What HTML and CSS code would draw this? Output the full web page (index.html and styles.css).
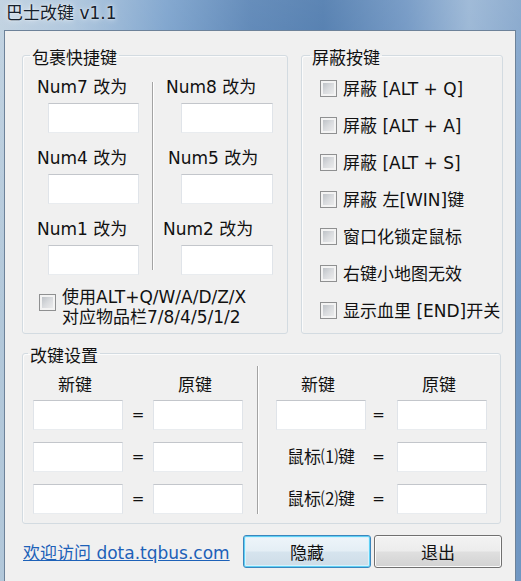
FILE: index.html
```
<!DOCTYPE html>
<html lang="zh-CN">
<head>
<meta charset="utf-8">
<title>巴士改键 v1.1</title>
<link rel="stylesheet" href="styles.css">
</head>
<body>
<div class="window">
  <div class="titlebar"><span class="title">巴士改键 v1.1</span></div>
  <div class="client">
    <div class="top-row">
      <fieldset class="group group-bag">
        <legend>包裹快捷键</legend>
        <div class="bag-grid">
          <div class="bag-col bag-left">
            <div class="cell"><div class="lbl">Num7 改为</div><div class="input bag-input"></div></div>
            <div class="cell"><div class="lbl">Num4 改为</div><div class="input bag-input"></div></div>
            <div class="cell"><div class="lbl">Num1 改为</div><div class="input bag-input"></div></div>
          </div>
          <div class="vdiv bag-div"></div>
          <div class="bag-col bag-right">
            <div class="cell"><div class="lbl">Num8 改为</div><div class="input bag-input"></div></div>
            <div class="cell"><div class="lbl lbl-r">Num5 改为</div><div class="input bag-input"></div></div>
            <div class="cell"><div class="lbl lbl-l">Num2 改为</div><div class="input bag-input"></div></div>
          </div>
        </div>
        <div class="check-row multi">
          <span class="cb"></span>
          <span class="cb-text">使用ALT+Q/W/A/D/Z/X<br>对应物品栏7/8/4/5/1/2</span>
        </div>
      </fieldset>
      <fieldset class="group group-block">
        <legend>屏蔽按键</legend>
        <ul class="block-list">
          <li class="check-row"><span class="cb"></span><span class="cb-text">屏蔽 [ALT + Q]</span></li>
          <li class="check-row"><span class="cb"></span><span class="cb-text">屏蔽 [ALT + A]</span></li>
          <li class="check-row"><span class="cb"></span><span class="cb-text">屏蔽 [ALT + S]</span></li>
          <li class="check-row"><span class="cb"></span><span class="cb-text">屏蔽 左[WIN]键</span></li>
          <li class="check-row"><span class="cb"></span><span class="cb-text">窗口化锁定鼠标</span></li>
          <li class="check-row"><span class="cb"></span><span class="cb-text">右键小地图无效</span></li>
          <li class="check-row"><span class="cb"></span><span class="cb-text">显示血里 [END]开关</span></li>
        </ul>
      </fieldset>
    </div>

    <fieldset class="group group-remap">
      <legend>改键设置</legend>
      <div class="remap">
        <div class="remap-half remap-left">
          <div class="r-row hdr-row"><div class="hdr">新键</div><div></div><div class="hdr">原键</div></div>
          <div class="r-row"><div class="input"></div><div class="eq">=</div><div class="input"></div></div>
          <div class="r-row"><div class="input"></div><div class="eq">=</div><div class="input"></div></div>
          <div class="r-row"><div class="input"></div><div class="eq">=</div><div class="input"></div></div>
        </div>
        <div class="vdiv remap-div"></div>
        <div class="remap-half remap-right">
          <div class="r-row hdr-row"><div class="hdr">新键</div><div></div><div class="hdr">原键</div></div>
          <div class="r-row"><div class="input"></div><div class="eq">=</div><div class="input"></div></div>
          <div class="r-row"><div class="mouse">鼠标⑴键</div><div class="eq">=</div><div class="input"></div></div>
          <div class="r-row"><div class="mouse">鼠标⑵键</div><div class="eq">=</div><div class="input"></div></div>
        </div>
      </div>
    </fieldset>

    <div class="bottom-row">
      <a class="link" href="#">欢迎访问 dota.tqbus.com</a>
      <div class="buttons">
        <button class="btn btn-default" type="button">隐藏</button>
        <button class="btn" type="button">退出</button>
      </div>
    </div>
  </div>
</div>
</body>
</html>
```
FILE: styles.css
```
* { box-sizing: border-box; }

html, body {
  margin: 0;
  padding: 0;
  width: 521px;
  height: 581px;
  overflow: hidden;
}

body {
  font-family: "DejaVu Sans", "Noto Sans CJK SC", sans-serif;
  font-size: 17px;
  color: #111;
}

.window {
  width: 521px;
  height: 581px;
  display: flex;
  flex-direction: column;
  background:
    linear-gradient(180deg, rgba(255,255,255,0.22) 0%, rgba(255,255,255,0) 55%),
    linear-gradient(90deg, #b3c8da 0%, #9dbad6 14%, #6391c3 32%, #3c6ea8 48%, #2f639f 62%, #5683b8 78%, #86a8cd 90%, #6f96c2 100%);
}

.titlebar {
  height: 30px;
  flex: none;
  padding-left: 6px;
  line-height: 26px;
}

.title {
  font-size: 17px;
  color: #15202c;
  text-shadow: 0 0 6px rgba(255,255,255,0.85), 0 0 2px rgba(255,255,255,0.7);
}

.client {
  flex: 1;
  margin: 0 5px 0 4px;
  background: #f0f0f0;
  border: 1px solid #6d8299;
  border-bottom: none;
  padding: 11px 12px 0 17px;
}

/* group boxes */
.group {
  margin: 0;
  padding: 0;
  min-width: 0;
  border: 1px solid #d3dbe1;
  border-radius: 3px;
  box-shadow: inset 1px 1px 0 #fbfbfb;
}

.group legend {
  padding: 6px 2px 0;
  line-height: 20px;
  font-size: 17px;
  color: #111;
}

.top-row {
  display: flex;
  gap: 13px;
  width: 481px;
}

.group-bag {
  width: 266px;
  height: 292px;
}
.group-bag legend { margin-left: 7px; }

.group-block {
  width: 202px;
  height: 292px;
  overflow: hidden;
}
.group-block legend { margin-left: 8px; }

/* bag shortcuts */
.bag-grid {
  display: flex;
  padding-top: 8px;
}

.bag-col {
  display: flex;
  flex-direction: column;
  gap: 14px;
}

.bag-left { width: 129px; padding-left: 14px; }
.bag-right { padding-left: 13px; }

.cell { display: flex; flex-direction: column; }

.lbl {
  line-height: 22px;
  height: 22px;
  white-space: nowrap;
}
.lbl-r { margin-left: 2px; }
.lbl-l { margin-left: -3px; }

.bag-left .bag-input { margin-left: 11px; width: 91px; }
.bag-right .bag-input { margin-left: 15px; width: 92px; }

.input {
  background: #fff;
  height: 30px;
  margin-top: 5px;
  border: 1px solid;
  border-color: #c3c6cb #e0e4e9 #e9ecef #e0e4e9;
}

.vdiv {
  width: 1px;
  background: #a3a3a3;
  box-shadow: 1px 0 0 #fff;
  flex: none;
}

.bag-div {
  margin-top: 6px;
  height: 188px;
}

/* checkboxes */
.check-row {
  display: flex;
  align-items: center;
  white-space: nowrap;
}

.cb {
  flex: none;
  width: 17px;
  height: 17px;
  border: 1px solid #8f9091;
  background: linear-gradient(135deg, #b4b9bf 0%, #d9dbde 50%, #f1f1f1 100%);
  box-shadow: inset 0 0 0 2px #f3f3f3;
}

.cb-text {
  margin-left: 6px;
  line-height: 20px;
}

.group-bag .check-row.multi {
  align-items: flex-start;
  margin-top: 12px;
  padding-left: 16px;
}
.group-bag .check-row.multi .cb { margin-top: 7px; }

.block-list {
  list-style: none;
  margin: 0;
  padding: 2px 0 0 18px;
}

.block-list .check-row {
  height: 37px;
  overflow: hidden;
}

/* remap */
.group-remap {
  width: 479px;
  margin-top: 6px;
}
.group-remap legend { margin-left: 5px; }

.remap {
  display: flex;
  align-items: stretch;
}

.remap-half {
  display: flex;
  flex-direction: column;
  gap: 12px;
  padding-top: 8px;
  padding-bottom: 9px;
}

.remap-left { padding-left: 10px; margin-right: 14px; }
.remap-right { padding-left: 18px; }

.remap-div { margin-bottom: 9px; }

.r-row {
  display: grid;
  grid-template-columns: 90px 30px 90px;
  align-items: center;
  height: 30px;
}

.remap-right .r-row { grid-template-columns: 90px 31px 90px; }

.r-row .input { margin-top: 0; }

.hdr-row {
  height: 22px;
  margin-bottom: -8px;
}

.hdr {
  text-align: center;
  line-height: 22px;
  padding-right: 6px;
}

.eq {
  text-align: center;
  font-size: 15px;
  line-height: 30px;
}

.remap-right .eq { padding-right: 6px; }

.mouse {
  text-align: center;
  line-height: 30px;
  white-space: nowrap;
}

/* bottom */
.bottom-row {
  display: flex;
  align-items: center;
  justify-content: space-between;
  margin-top: 11px;
  width: 481px;
  padding-right: 1px;
}

.link {
  margin-left: 1px;
  color: #1d61b8;
  text-decoration: underline;
  line-height: 20px;
  padding-top: 3px;
}

.buttons {
  display: flex;
  gap: 3px;
}

.btn {
  width: 128px;
  height: 33px;
  font-family: "DejaVu Sans", "Noto Sans CJK SC", sans-serif;
  font-size: 17px;
  color: #111;
  border: 1px solid #707070;
  border-radius: 3px;
  background: linear-gradient(180deg, #f3f3f3 0%, #ececec 48%, #dfdfdf 52%, #d2d2d2 100%);
  box-shadow: inset 0 0 0 1px #fbfbfb;
  padding: 0;
}

.btn-default {
  border-color: #3b86bd;
  background: linear-gradient(180deg, #eef5fa 0%, #e4eef5 48%, #d6e4ee 52%, #cddce7 100%);
  box-shadow: inset 0 0 0 1px #5fd0f5, inset 0 0 0 2px #d8f2fc;
}
```
